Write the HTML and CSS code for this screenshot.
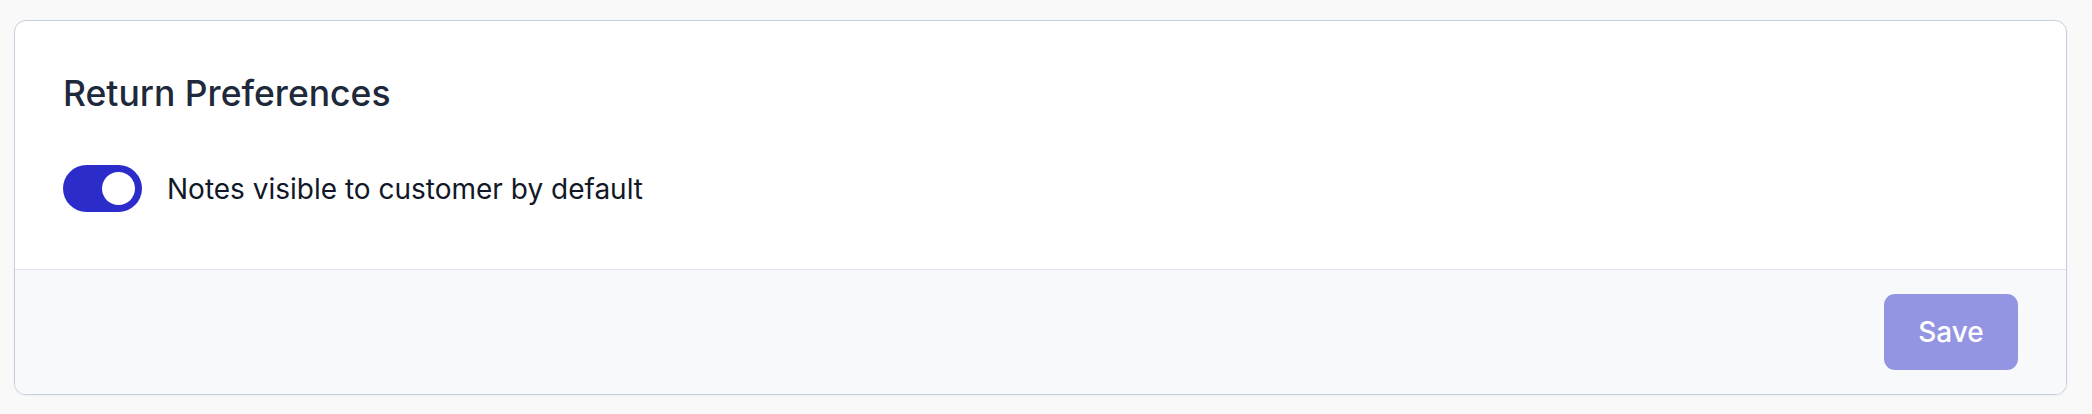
FILE: index.html
```html
<!DOCTYPE html>
<html lang="en">
<head>
    <meta charset="UTF-8">
    <meta name="viewport" content="width=device-width, initial-scale=1.0">
    <title>Return Preferences</title>
    <link rel="stylesheet" href="styles.css">
</head>
<body>
    <div class="page">
        <form class="card">
            <div class="card-body">
                <h2 class="card-title">Return Preferences</h2>

                <label class="toggle-row">
                    <span class="toggle on"><span class="knob"></span></span>
                    <span class="toggle-label">Notes visible to customer by default</span>
                </label>
            </div>

            <div class="card-footer">
                <button type="button" class="btn-save" disabled>Save</button>
            </div>
        </form>
    </div>
</body>
</html>
```

FILE: styles.css
```css
html, body {
    margin: 0;
    padding: 0;
    background-color: #f9f9f9;
}
body {
    font-family: Inter, "Noto Sans", Arial, sans-serif;
}
.page {
    padding: 20px 25px 16px 14px;
}
.card {
    background-color: #fff;
    border: 1px solid #c6cfdd;
    border-radius: 12px;
    overflow: hidden;
    box-shadow: 0 1px 2px rgba(15, 23, 42, 0.05);
}
.card-body {
    padding: 53px 48px 57px 48px;
}
.card-title {
    margin: 0 0 51px 0;
    font-size: 35.5px;
    line-height: 40px;
    font-weight: 500;
    color: #1e293b;
}
/* toggle switch */
.toggle-row {
    display: flex;
    align-items: center;
    gap: 25px;
}
.toggle {
    display: flex;
    align-items: center;
    justify-content: flex-end;
    box-sizing: border-box;
    width: 79px;
    height: 47px;
    padding: 7px;
    border-radius: 24px;
    background-color: #2c2ccb;
}
.knob {
    width: 33px;
    height: 33px;
    border-radius: 50%;
    background-color: #fff;
}
.toggle-label {
    font-size: 28px;
    line-height: 36px;
    color: #111827;
}
.card-footer {
    display: flex;
    justify-content: flex-end;
    padding: 24px 48px 24px 48px;
    background-color: #f8f9fb;
    border-top: 1px solid #dfe4ec;
}
.btn-save {
    width: 134px;
    height: 76px;
    border: none;
    border-radius: 11px;
    background-color: #9495e2;
    color: #fff;
    font-family: inherit;
    font-size: 28px;
    font-weight: 500;
}
```
